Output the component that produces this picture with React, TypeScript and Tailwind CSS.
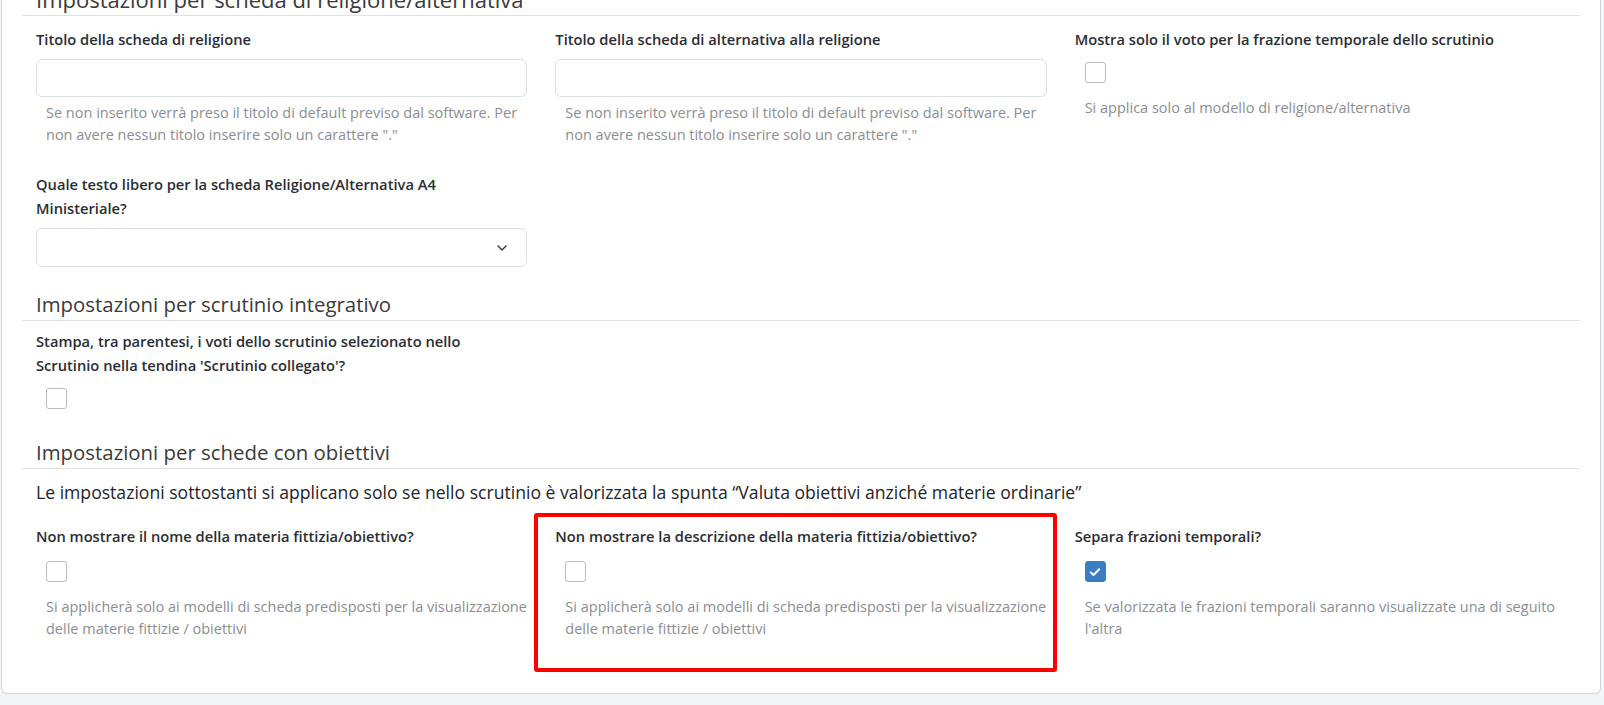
import React from 'react';
import { ChevronDown } from 'lucide-react';

const font = { fontFamily: '"Open Sans", "Noto Sans", Arial, sans-serif' };

const Label = ({ children }: { children: React.ReactNode }) => (
  <div className="text-[14.7px] leading-[24px] font-semibold text-[#2a2d34]">{children}</div>
);

const Help = ({ children, className = '' }: { children: React.ReactNode; className?: string }) => (
  <div className={`pl-[10px] text-[14.5px] leading-[22px] text-[#8b8e92] ${className}`}>{children}</div>
);

const Checkbox = ({ checked = false, className = '' }: { checked?: boolean; className?: string }) => (
  <div
    className={`ml-[10px] flex h-[21px] w-[21px] items-center justify-center rounded-[3px] border ${
      checked ? 'border-[#3b7dc2] bg-[#3b7dc2]' : 'border-[#b8bbbf] bg-white'
    } ${className}`}
  >
    {checked && (
      <svg width="14" height="14" viewBox="0 0 16 16" fill="none">
        <path d="M3.2 8.4l3.1 3L12.8 4.9" stroke="white" strokeWidth="2.2" strokeLinecap="round" strokeLinejoin="round" />
      </svg>
    )}
  </div>
);

const Heading = ({ children, className = '' }: { children: React.ReactNode; className?: string }) => (
  <>
    <h3 className={`px-[14px] leading-[24px] font-normal text-[#3a3a3a] ${className}`}>{children}</h3>
    <div className="mt-[4px] border-t border-[#e2e2e2]"></div>
  </>
);

const helpTitle = 'Se non inserito verrà preso il titolo di default previso dal software. Per non avere nessun titolo inserire solo un carattere "."';
const helpObiettivi = 'Si applicherà solo ai modelli di scheda predisposti per la visualizzazione delle materie fittizie / obiettivi';

export default function App() {
  return (
    <div className="relative h-[705px] overflow-hidden bg-[#f4f5f9] pl-[1px]" style={font}>
      <div className="flex w-[1600px] flex-col rounded-b-[6px] border border-t-0 border-[#d3d4d9] bg-white px-5 pb-[53px]">
        <Heading className="-mt-[13px] text-[22px]">Impostazioni per scheda di religione/alternativa</Heading>

        <div className="mt-[11px] grid grid-cols-3">
          <div className="px-[14px]">
            <Label>Titolo della scheda di religione</Label>
            <div className="mt-[8px] h-[38px] rounded-[6px] border border-[#dcdfe3] bg-white"></div>
            <Help className="mt-[5px]">{helpTitle}</Help>
          </div>
          <div className="px-[14px]">
            <Label>Titolo della scheda di alternativa alla religione</Label>
            <div className="mt-[8px] h-[38px] rounded-[6px] border border-[#dcdfe3] bg-white"></div>
            <Help className="mt-[5px]">{helpTitle}</Help>
          </div>
          <div className="px-[14px]">
            <Label>Mostra solo il voto per la frazione temporale dello scrutinio</Label>
            <Checkbox className="mt-[11px]" />
            <Help className="mt-[14px]">Si applica solo al modello di religione/alternativa</Help>
          </div>
        </div>

        <div className="mt-[26px] grid grid-cols-3">
          <div className="px-[14px]">
            <Label>
              Quale testo libero per la scheda Religione/Alternativa A4
              <br />
              Ministeriale?
            </Label>
            <div className="mt-[8px] flex h-[39px] items-center justify-end rounded-[6px] border border-[#dcdfe3] bg-white pr-4">
              <ChevronDown size={16} strokeWidth={2} className="text-[#333]" />
            </div>
          </div>
        </div>

        <Heading className="mt-[25px] text-[20.4px]">Impostazioni per scrutinio integrativo</Heading>

        <div className="mt-[8px] grid grid-cols-3">
          <div className="px-[14px]">
            <Label>
              Stampa, tra parentesi, i voti dello scrutinio selezionato nello
              <br />
              Scrutinio nella tendina 'Scrutinio collegato'?
            </Label>
            <Checkbox className="mt-[11px]" />
          </div>
        </div>

        <Heading className="mt-[31px] text-[20.4px]">Impostazioni per schede con obiettivi</Heading>

        <p className="mt-[11px] px-[14px] text-[17.6px] leading-[24px] text-[#212529]">
          Le impostazioni sottostanti si applicano solo se nello scrutinio è valorizzata la spunta “Valuta obiettivi anziché materie ordinarie”
        </p>

        <div className="mt-[20px] grid grid-cols-3">
          <div className="px-[14px]">
            <Label>Non mostrare il nome della materia fittizia/obiettivo?</Label>
            <Checkbox className="mt-[13px]" />
            <Help className="mt-[14px]">{helpObiettivi}</Help>
          </div>
          <div className="px-[14px]">
            <Label>Non mostrare la descrizione della materia fittizia/obiettivo?</Label>
            <Checkbox className="mt-[13px]" />
            <Help className="mt-[14px]">{helpObiettivi}</Help>
          </div>
          <div className="px-[14px]">
            <Label>Separa frazioni temporali?</Label>
            <Checkbox checked className="mt-[13px]" />
            <Help className="mt-[14px]">Se valorizzata le frazioni temporali saranno visualizzate una di seguito l'altra</Help>
          </div>
        </div>
      </div>

      {/* red highlight annotation */}
      <div className="pointer-events-none absolute left-[534px] top-[513px] h-[159px] w-[523px] rounded-[3px] border-4 border-[#ff0000]"></div>
    </div>
  );
}
